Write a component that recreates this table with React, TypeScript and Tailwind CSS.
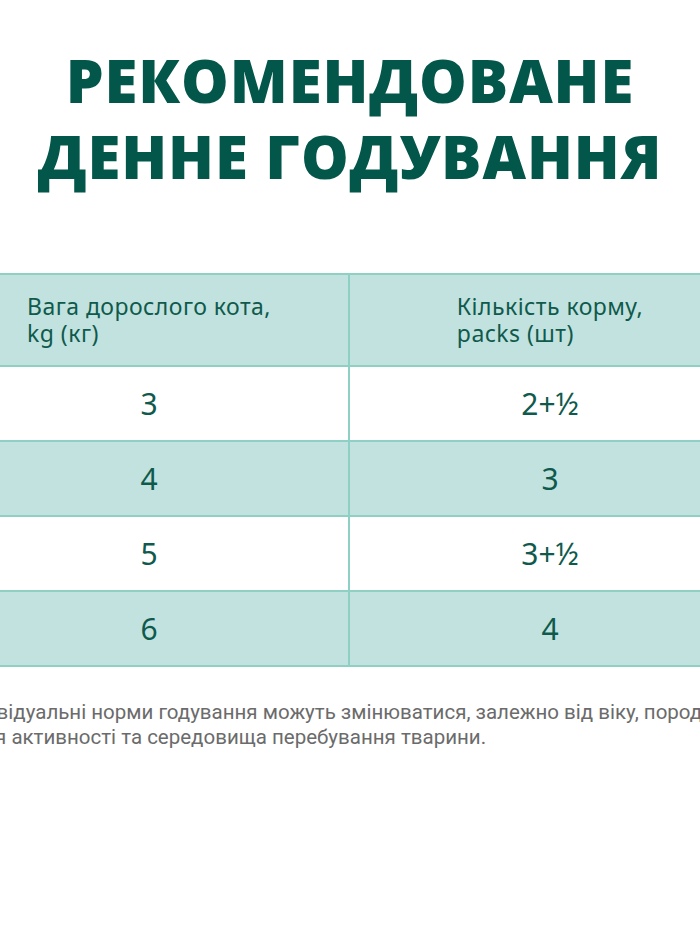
const rows = [
  { weight: "3", amount: "2+½", shaded: false },
  { weight: "4", amount: "3", shaded: true },
  { weight: "5", amount: "3+½", shaded: false },
  { weight: "6", amount: "4", shaded: true },
];

export default function App() {
  return (
    <div className="min-h-screen w-full overflow-hidden bg-white flex flex-col items-center">
      {/* Title */}
      <h1
        className="mt-[42px] whitespace-nowrap text-center uppercase text-[#03574a] text-[60px] leading-[76px] font-extrabold tracking-[0.015em]"
        style={{ fontFamily: "'Open Sans', 'Noto Sans', sans-serif" }}
      >
        Рекомендоване
        <br />
        денне годування
      </h1>

      {/* Table */}
      <div
        className="mt-[79px] w-[800px] shrink-0 border-t-2 border-b-2 border-[#8fd0c4] text-[#0f5a4c]"
        style={{ fontFamily: "'Noto Sans', 'Open Sans', sans-serif" }}
      >
        <div className="grid grid-cols-2 bg-[#c2e2df] h-[90px]">
          <div className="flex items-center justify-center border-r-2 border-[#8fd0c4]">
            <p className="text-left text-[23px] leading-[27px] tracking-[0.02em]">
              Вага дорослого кота,
              <br />
              kg (кг)
            </p>
          </div>
          <div className="flex items-center justify-center">
            <p className="text-left text-[23px] leading-[27px] tracking-[0.02em]">
              Кількість корму,
              <br />
              packs (шт)
            </p>
          </div>
        </div>
        {rows.map((r) => (
          <div
            key={r.weight}
            className={
              "grid grid-cols-2 h-[75px] border-t-2 border-[#8fd0c4] " +
              (r.shaded ? "bg-[#c2e2df]" : "bg-white")
            }
          >
            <div className="flex items-center justify-center border-r-2 border-[#8fd0c4] text-[30px]">
              {r.weight}
            </div>
            <div className="flex items-center justify-center text-[30px]">{r.amount}</div>
          </div>
        ))}
      </div>

      {/* Note */}
      <div className="w-[800px] shrink-0 mt-[33px] pl-[5px]">
        <p
          className="text-[20.5px] leading-[25px] text-[#6b6b6b]"
          style={{ fontFamily: "Roboto, 'DejaVu Sans Condensed', sans-serif" }}
        >
          Індивідуальні норми годування можуть змінюватися, залежно від віку, породи,
          <br />
          рівня активності та середовища перебування тварини.
        </p>
      </div>
    </div>
  );
}
